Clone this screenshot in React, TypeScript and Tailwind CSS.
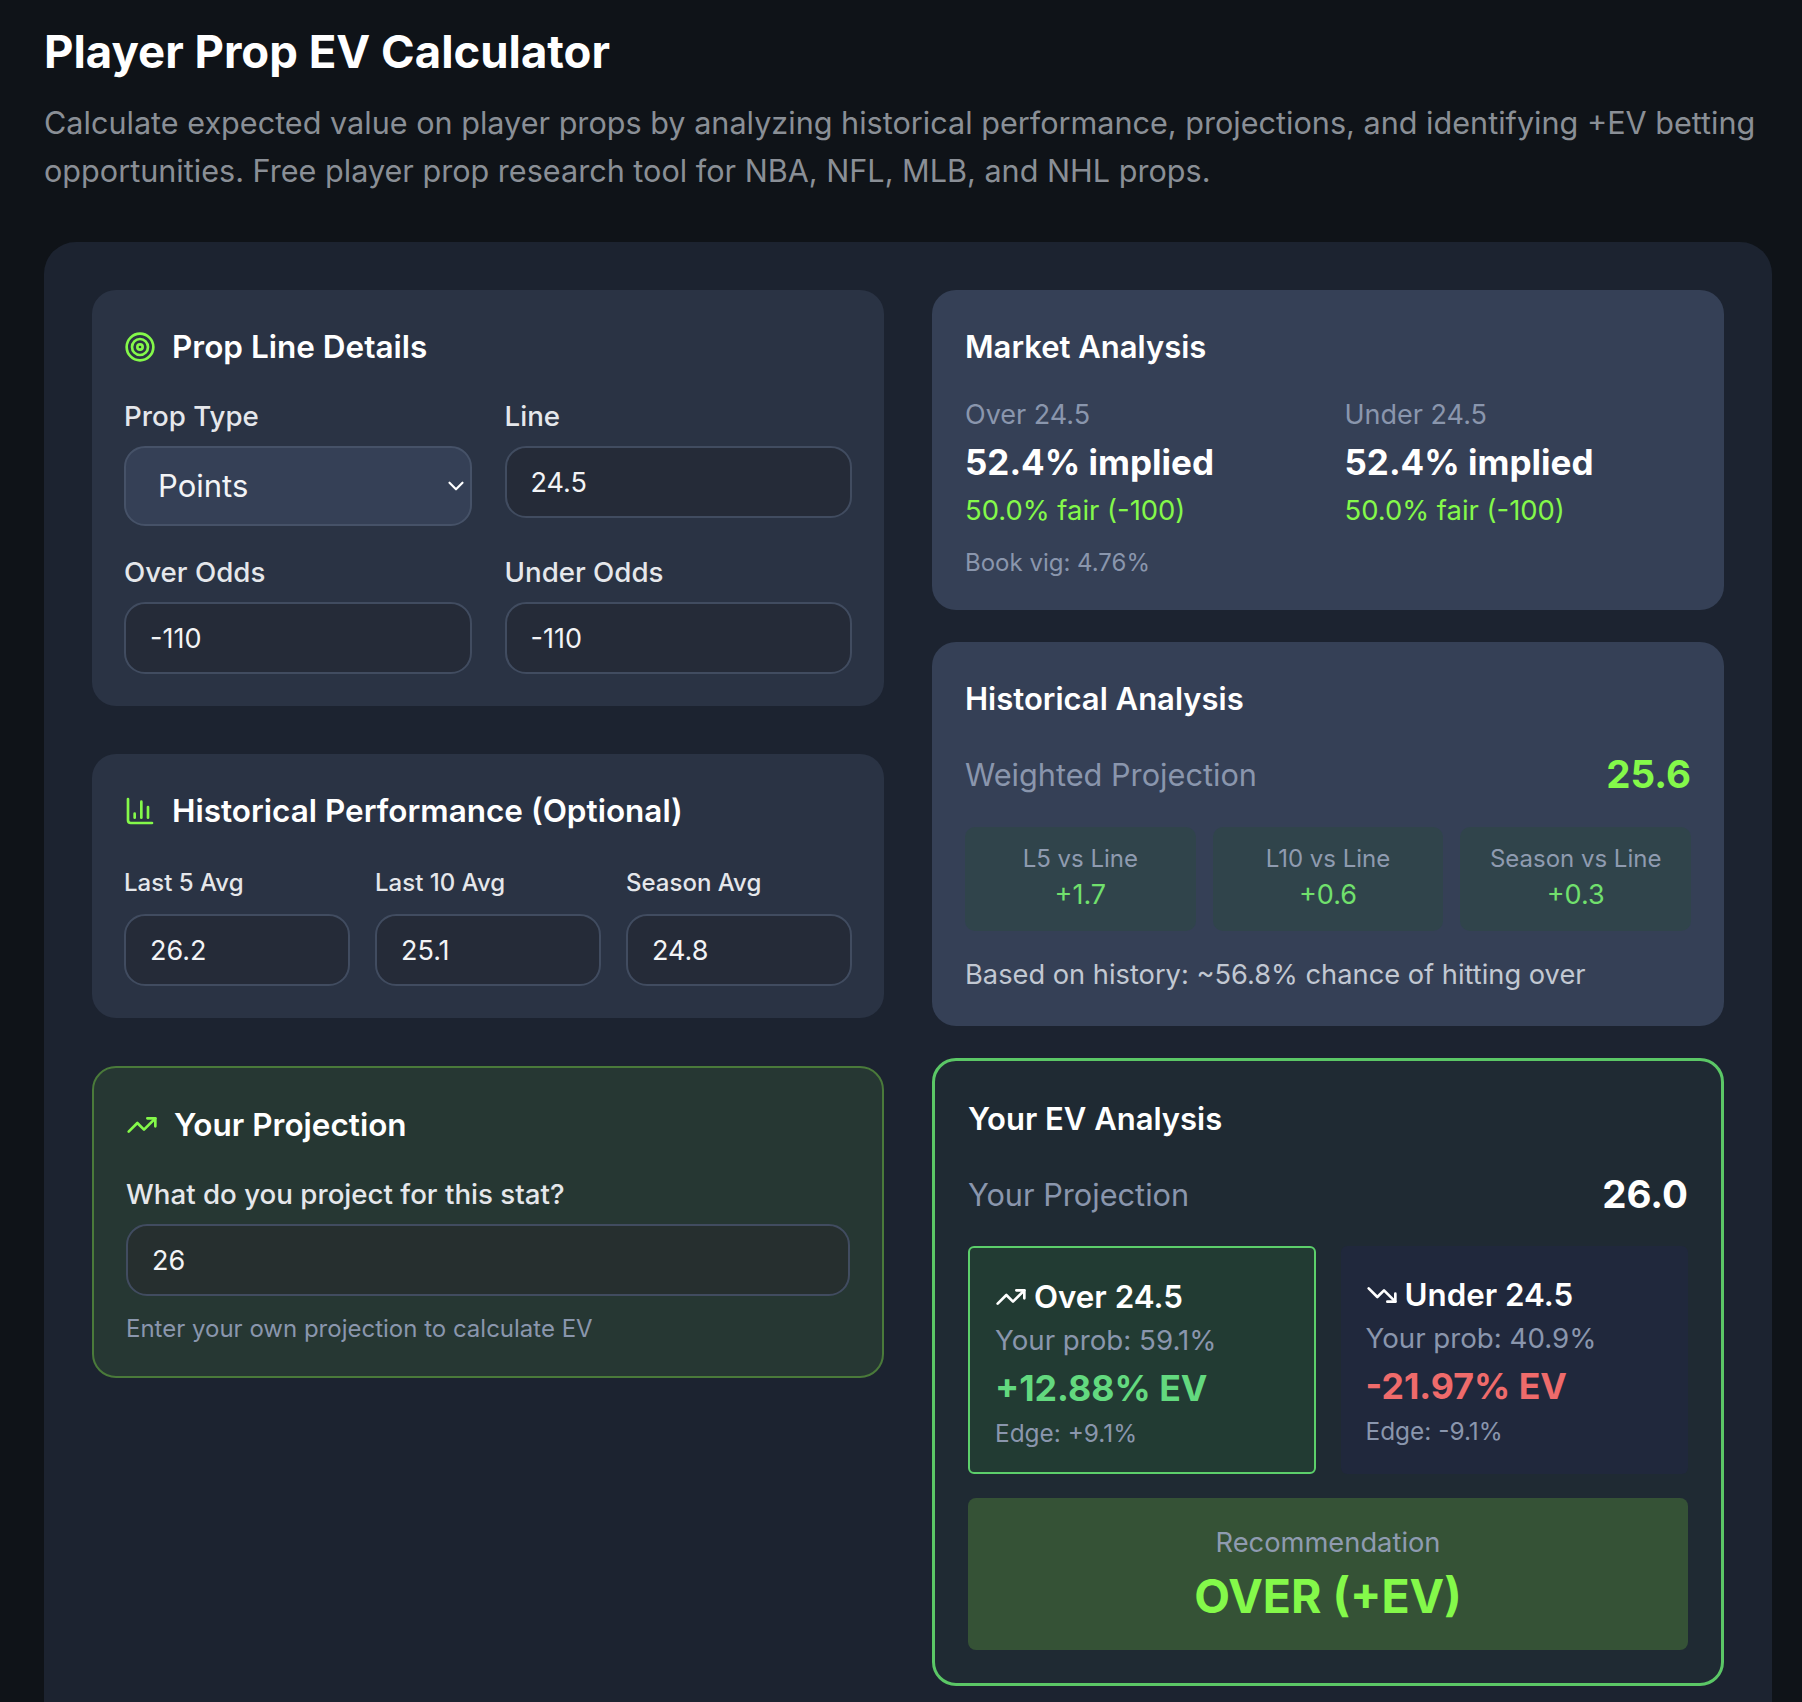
import { ChevronDown, ChartColumn, Target, TrendingDown, TrendingUp } from "lucide-react";

const inputClass =
  "block w-full h-[72px] rounded-[21px] border-2 border-[#414c60] bg-[#252b38] px-[24px] text-[27px] text-[#f3f4f6] outline-none";

function Field({ label, value, small }: { label: string; value: string; small?: boolean }) {
  return (
    <div>
      <label
        className={
          small
            ? "block h-[30px] leading-[30px] mb-[16px] text-[24px] font-medium text-[#e5e7eb]"
            : "block h-[32px] leading-[32px] mb-[14px] text-[27.7px] font-medium text-[#e5e7eb]"
        }
      >
        {label}
      </label>
      <input className={inputClass} defaultValue={value} />
    </div>
  );
}

function Heading({ children }: { children: React.ReactNode }) {
  return <h3 className="h-[48px] leading-[48px] text-[31px] font-semibold text-white">{children}</h3>;
}

function MarketSide({ label }: { label: string }) {
  return (
    <div>
      <div className="h-[32px] leading-[32px] text-[27px] text-[#8a96ad]">{label}</div>
      <div className="mt-[9px] h-[44px] leading-[44px] text-[35px] font-bold text-white">52.4% implied</div>
      <div className="mt-[10px] h-[32px] leading-[32px] text-[27.4px] text-[#84f94a]">50.0% fair (-100)</div>
    </div>
  );
}

function VsLine({ label, value }: { label: string; value: string }) {
  return (
    <div className="h-[104px] rounded-[10px] bg-[#30444b] pt-[18px] text-center">
      <div className="h-[28px] leading-[28px] text-[24px] text-[#8f9bb0]">{label}</div>
      <div className="mt-[6px] h-[32px] leading-[32px] text-[27px] text-[#71e06d]">{value}</div>
    </div>
  );
}

export default function App() {
  return (
    <div className="h-screen overflow-hidden bg-[#0f1318] pl-[44px] pr-[30px] pt-[26px] font-['Inter',sans-serif]">
      <h1 className="h-[52px] leading-[52px] text-[45.5px] font-bold text-white">Player Prop EV Calculator</h1>
      <p className="mt-[21px] pr-[2px] text-[30.6px] leading-[48px] text-[#8a8f96]">
        Calculate expected value on player props by analyzing historical performance, projections, and identifying +EV
        betting opportunities. Free player prop research tool for NBA, NFL, MLB, and NHL props.
      </p>

      <div className="mt-[47px] rounded-[32px] bg-[#1c2330] p-[48px]">
        <div className="grid grid-cols-2 gap-[48px] items-start">
          {/* Left column */}
          <div className="flex flex-col gap-[48px]">
            <section className="rounded-[24px] bg-[#2a3344] px-[32px] pt-[33px] pb-[32px]">
              <h3 className="flex h-[48px] items-center gap-[16px] text-[31.5px] font-semibold text-white">
                <Target className="h-[32px] w-[32px] text-[#84f94a]" strokeWidth={2} />
                Prop Line Details
              </h3>
              <div className="mt-[29px] grid grid-cols-2 gap-x-[33px] gap-y-[30px] items-start">
                <div>
                  <label className="block h-[32px] leading-[32px] mb-[14px] text-[27.7px] font-medium text-[#e5e7eb]">
                    Prop Type
                  </label>
                  <div className="relative">
                    <select className="block w-full h-[80px] appearance-none rounded-[21px] border-2 border-[#465268] bg-[#354056] px-[32px] text-[31px] text-[#f3f4f6] outline-none">
                      <option>Points</option>
                    </select>
                    <ChevronDown className="absolute right-[3px] top-[27px] h-[26px] w-[26px] text-white" strokeWidth={2} />
                  </div>
                </div>
                <div>
                  <label className="block h-[32px] leading-[32px] mb-[14px] text-[27.7px] font-medium text-[#e5e7eb]">
                    Line
                  </label>
                  <input className={inputClass} defaultValue="24.5" />
                </div>
                <Field label="Over Odds" value="-110" />
                <Field label="Under Odds" value="-110" />
              </div>
            </section>

            <section className="rounded-[24px] bg-[#2a3344] px-[32px] pt-[33px] pb-[32px]">
              <h3 className="flex h-[48px] items-center gap-[16px] text-[31.5px] font-semibold text-white">
                <ChartColumn className="h-[32px] w-[32px] text-[#84f94a]" strokeWidth={2} />
                Historical Performance (Optional)
              </h3>
              <div className="mt-[33px] grid grid-cols-3 gap-[25px]">
                <Field small label="Last 5 Avg" value="26.2" />
                <Field small label="Last 10 Avg" value="25.1" />
                <Field small label="Season Avg" value="24.8" />
              </div>
            </section>

            <section className="rounded-[24px] border-2 border-[#4a7a3a] bg-[#263733] px-[32px] pt-[33px] pb-[32px]">
              <h3 className="flex h-[48px] items-center gap-[16px] text-[31.5px] font-semibold text-white">
                <TrendingUp className="h-[32px] w-[32px] text-[#84f94a]" strokeWidth={2} />
                Your Projection
              </h3>
              <label className="mt-[29px] block h-[32px] leading-[32px] mb-[14px] text-[27.7px] font-medium text-[#e5e7eb]">
                What do you project for this stat?
              </label>
              <input
                className="block w-full h-[72px] rounded-[21px] border-2 border-[#414c60] bg-[#262f2f] px-[24px] text-[27px] text-[#f3f4f6] outline-none"
                defaultValue="26"
              />
              <p className="mt-[18px] h-[30px] leading-[30px] text-[24px] text-[#8a96ad]">
                Enter your own projection to calculate EV
              </p>
            </section>
          </div>

          {/* Right column */}
          <div className="flex flex-col gap-[32px]">
            <section className="rounded-[24px] bg-[#354056] px-[33px] pt-[33px] pb-[33px]">
              <Heading>Market Analysis</Heading>
              <div className="mt-[28px] grid grid-cols-2 gap-[33px]">
                <MarketSide label="Over 24.5" />
                <MarketSide label="Under 24.5" />
              </div>
              <div className="mt-[23px] h-[28px] leading-[28px] text-[24px] text-[#8a96ad]">Book vig: 4.76%</div>
            </section>

            <section className="rounded-[24px] bg-[#354056] px-[33px] pt-[33px] pb-[35px]">
              <Heading>Historical Analysis</Heading>
              <div className="mt-[29px] flex h-[46px] items-center justify-between">
                <span className="text-[30.7px] text-[#8a96ad]">Weighted Projection</span>
                <span className="text-[38.5px] font-bold text-[#84f94a]">25.6</span>
              </div>
              <div className="mt-[29px] grid grid-cols-3 gap-[17px]">
                <VsLine label="L5 vs Line" value="+1.7" />
                <VsLine label="L10 vs Line" value="+0.6" />
                <VsLine label="Season vs Line" value="+0.3" />
              </div>
              <p className="mt-[28px] h-[32px] leading-[32px] text-[27.25px] text-[#c2c8d2]">
                Based on history: ~56.8% chance of hitting over
              </p>
            </section>

            <section className="rounded-[24px] border-[3px] border-[#5bc766] bg-[#1f2a33] px-[33px] pt-[34px] pb-[33px]">
              <Heading>Your EV Analysis</Heading>
              <div className="mt-[29px] flex h-[46px] items-center justify-between">
                <span className="text-[30.7px] text-[#8a96ad]">Your Projection</span>
                <span className="text-[38.5px] font-bold text-white">26.0</span>
              </div>
              <div className="mt-[28px] grid grid-cols-2 gap-[25px]">
                <div className="h-[228px] rounded-[6px] border-2 border-[#5ccf6b] bg-[#223b33] px-[25px] pt-[29px]">
                  <div className="flex h-[40px] items-center gap-[7px] text-[31.3px] font-semibold text-white">
                    <TrendingUp className="h-[32px] w-[32px]" strokeWidth={2} />
                    Over 24.5
                  </div>
                  <div className="mt-[7px] h-[32px] leading-[32px] text-[27.7px] text-[#8a96ad]">Your prob: 59.1%</div>
                  <div className="mt-[10px] h-[44px] leading-[44px] text-[35.7px] font-bold text-[#63d97f]">+12.88% EV</div>
                  <div className="mt-[9px] h-[28px] leading-[28px] text-[24.4px] text-[#8a96ad]">Edge: +9.1%</div>
                </div>
                <div className="h-[228px] rounded-[6px] bg-[#20283c] px-[25px] pt-[29px]">
                  <div className="flex h-[40px] items-center gap-[7px] text-[31.3px] font-semibold text-white">
                    <TrendingDown className="h-[32px] w-[32px]" strokeWidth={2} />
                    Under 24.5
                  </div>
                  <div className="mt-[7px] h-[32px] leading-[32px] text-[27.7px] text-[#8a96ad]">Your prob: 40.9%</div>
                  <div className="mt-[10px] h-[44px] leading-[44px] text-[35.7px] font-bold text-[#ef6b6b]">-21.97% EV</div>
                  <div className="mt-[9px] h-[28px] leading-[28px] text-[24.4px] text-[#8a96ad]">Edge: -9.1%</div>
                </div>
              </div>
              <div className="mt-[24px] h-[152px] rounded-[8px] bg-[#355236] pt-[30px] text-center">
                <div className="h-[30px] leading-[30px] text-[27.3px] text-[#8f9bb0]">Recommendation</div>
                <div className="mt-[10px] h-[56px] leading-[56px] text-[46.4px] font-bold text-[#84f94a]">OVER (+EV)</div>
              </div>
            </section>
          </div>
        </div>
      </div>
    </div>
  );
}
